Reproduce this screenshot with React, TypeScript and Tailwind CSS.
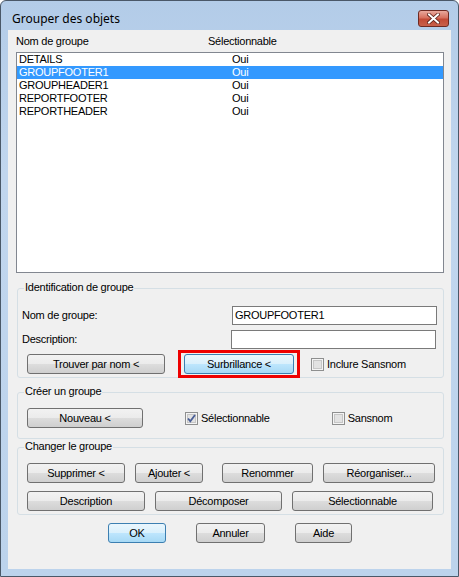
import React from "react";

const font = { fontFamily: '"Liberation Sans", Arial, sans-serif' };

function Btn({ label, w, focus = false, className = "" }: { label: string; w: string; focus?: boolean; className?: string }) {
  return (
    <div
      className={
        "h-[20px] flex items-center justify-center rounded-[3px] border text-[11px] text-black leading-none " +
        (focus
          ? "border-[#3c7fb1] bg-[linear-gradient(#eaf6fd_0%,#d9f0fc_50%,#bee6fd_50%,#a7d9f5_100%)] "
          : "border-[#707070] bg-[linear-gradient(#f2f2f2_0%,#ebebeb_50%,#dddddd_50%,#cfcfcf_100%)] ") +
        w +
        " " +
        className
      }
    >
      {label}
    </div>
  );
}

function Check({ checked = false }: { checked?: boolean }) {
  return (
    <svg width="13" height="13" viewBox="0 0 13 13" className="shrink-0">
      <rect x="0.5" y="0.5" width="12" height="12" fill="#f4f4f4" stroke="#8e8f8f" />
      <rect x="2.5" y="2.5" width="8" height="8" fill="#e2e2e2" stroke="#c6c6c6" />
      {checked && <path d="M3 6.5 L5.3 9.2 L10 3" fill="none" stroke="#4a5f97" strokeWidth="1.8" />}
    </svg>
  );
}

function GroupBox({ title, h, className = "", children }: { title: string; h: string; className?: string; children: React.ReactNode }) {
  return (
    <div className={"relative ml-[9px] w-[427px] rounded-[3px] border border-[#d5dfe5] " + h + " " + className}>
      <span className="absolute left-[6px] top-[-8px] bg-[#f0f0f0] px-[1px] text-[11px] leading-[13px] text-black">{title}</span>
      {children}
    </div>
  );
}

export default function App() {
  const rows = [
    ["DETAILS", "Oui"],
    ["GROUPFOOTER1", "Oui"],
    ["GROUPHEADER1", "Oui"],
    ["REPORTFOOTER", "Oui"],
    ["REPORTHEADER", "Oui"],
  ];
  return (
    <div
      style={font}
      className="w-[459px] h-[577px] rounded-t-[6px] border border-[#4a5868] bg-[linear-gradient(180deg,#b3cce8_0%,#c1d6ee_30%,#bcd3ec_100%)] flex flex-col text-black"
    >
      {/* Title bar */}
      <div className="h-[29px] flex items-start">
        <div className="ml-[11px] mt-[10px] text-[12px] leading-[15px] text-black" style={{ fontFamily: '"Noto Sans", "Liberation Sans", sans-serif' }}>
          Grouper des objets
        </div>
        <div className="ml-auto mr-[9px] mt-[9px] w-[31px] h-[17px] rounded-[3px] border border-[#6e2a22] bg-[linear-gradient(#e9a99d_0%,#d7715f_45%,#c24a36_55%,#c8614b_100%)] flex items-center justify-center">
          <svg width="13" height="11" viewBox="0 0 13 11">
            <path d="M2 1.5 L11 9.5 M11 1.5 L2 9.5" stroke="#5a2018" strokeWidth="3.6" strokeLinecap="square" />
            <path d="M2 1.5 L11 9.5 M11 1.5 L2 9.5" stroke="#ffffff" strokeWidth="2" strokeLinecap="square" />
          </svg>
        </div>
      </div>

      {/* Client area */}
      <div className="ml-[7px] w-[443px] h-[539px] bg-[#f0f0f0] flex flex-col tracking-[-0.25px]">
        <div className="h-[22px] flex items-center text-[11px] leading-[13px]">
          <span className="ml-[8px] w-[192px]">Nom de groupe</span>
          <span>Sélectionnable</span>
        </div>
        <div className="ml-[8px] w-[428px] h-[221px] border border-[#828790] bg-white">
          {rows.map(([n, s], i) => (
            <div
              key={n}
              className={"h-[13px] flex items-center text-[11px] leading-[13px] " + (i === 1 ? "bg-[#3399ff] text-white" : "text-black")}
            >
              <span className="ml-[2px] w-[213px]">{n}</span>
              <span>{s}</span>
            </div>
          ))}
        </div>

        <GroupBox title="Identification de groupe" h="h-[90px]" className="mt-[15px]">
          <div className="flex items-center mt-[17px]">
            <span className="ml-[4px] w-[210px] text-[11px]">Nom de groupe:</span>
            <div className="w-[205px] h-[19px] border border-[#7a7a7a] bg-white flex items-center text-[11px] pl-[2px]">GROUPFOOTER1</div>
          </div>
          <div className="flex items-center mt-[5px]">
            <span className="ml-[4px] w-[209px] text-[11px]">Description:</span>
            <div className="w-[205px] h-[19px] border border-[#7a7a7a] bg-white" />
          </div>
          <div className="flex items-center mt-[5px]">
            <Btn label="Trouver par nom <" w="w-[138px] ml-[9px]" />
            <div className="relative ml-[19px]">
              <Btn label="Surbrillance <" w="w-[110px]" focus />
              <div className="absolute left-[-6px] top-[-4px] w-[122px] h-[28px] border-[3px] border-[#ee0000]" />
            </div>
            <div className="ml-[17px] flex items-center">
              <Check />
              <span className="ml-[3px] text-[11px]">Inclure Sansnom</span>
            </div>
          </div>
        </GroupBox>

        <GroupBox title="Créer un groupe" h="h-[47px]" className="mt-[14px]">
          <div className="flex items-center mt-[15px]">
            <Btn label="Nouveau <" w="w-[116px] ml-[9px]" />
            <div className="ml-[42px] flex items-center">
              <Check checked />
              <span className="ml-[3px] text-[11px]">Sélectionnable</span>
            </div>
            <div className="ml-[62px] flex items-center">
              <Check />
              <span className="ml-[3px] text-[11px]">Sansnom</span>
            </div>
          </div>
        </GroupBox>

        <GroupBox title="Changer le groupe" h="h-[68px]" className="mt-[8px]">
          <div className="flex items-center mt-[15px]">
            <Btn label="Supprimer <" w="w-[98px] ml-[9px]" />
            <Btn label="Ajouter <" w="w-[68px] ml-[10px]" />
            <Btn label="Renommer" w="w-[91px] ml-[19px]" />
            <Btn label="Réorganiser..." w="w-[112px] ml-[10px]" />
          </div>
          <div className="flex items-center mt-[8px]">
            <Btn label="Description" w="w-[118px] ml-[9px]" />
            <Btn label="Décomposer" w="w-[127px] ml-[10px]" />
            <Btn label="Sélectionnable" w="w-[141px] ml-[10px]" />
          </div>
        </GroupBox>

        <div className="flex items-center mt-[8px]">
          <Btn label="OK" w="w-[58px] ml-[100px]" focus />
          <Btn label="Annuler" w="w-[69px] ml-[30px]" />
          <Btn label="Aide" w="w-[57px] ml-[30px]" />
        </div>
      </div>
    </div>
  );
}
